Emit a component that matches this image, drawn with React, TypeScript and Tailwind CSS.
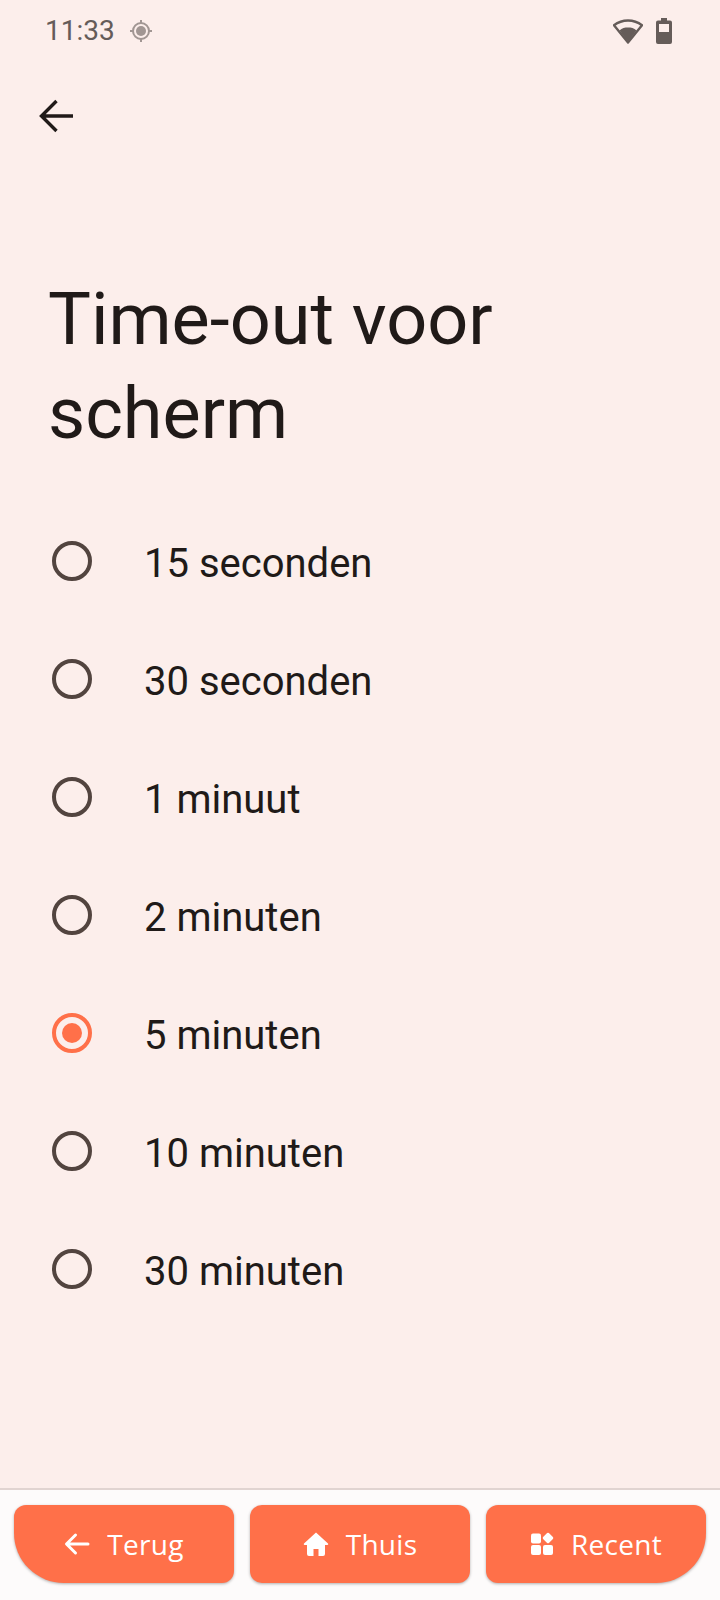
const options = ['15 seconden', '30 seconden', '1 minuut', '2 minuten', '5 minuten', '10 minuten', '30 minuten'];

const Radio = ({ checked }: { checked: boolean }) => (
    <span className={`flex h-10 w-10 shrink-0 items-center justify-center rounded-full border-4 ${checked ? 'border-[#ff7049]' : 'border-[#52443f]'}`}>
        {checked && <span className="h-5 w-5 rounded-full bg-[#ff7049]" />}
    </span>
);

export default function App() {
    return (
        <div className="flex h-[1600px] w-[720px] flex-col overflow-hidden bg-[#fceeeb] font-['Roboto',sans-serif] text-[#201a18]">
            {/* Status bar */}
            <div className="flex h-[60px] items-center justify-between pl-[45px] pr-[48px] pt-[2px] text-[#655c59]">
                <div className="flex items-center gap-[14px]">
                    <span className="text-[28px] leading-none">11:33</span>
                    <svg width="24" height="24" viewBox="0 0 24 24" fill="none" className="opacity-60">
                        <circle cx="12" cy="12" r="8" stroke="currentColor" strokeWidth="2" />
                        <circle cx="12" cy="12" r="5" fill="currentColor" />
                        <path d="M12 1v4M12 19v4M1 12h4M19 12h4" stroke="currentColor" strokeWidth="2" />
                    </svg>
                </div>
                <div className="flex items-center gap-[13px]">
                    <svg width="30" height="26" viewBox="0 0 30 26">
                        <path d="M15 2.500C9.500 2.500 5 4.200 1 7.300L15 24.500 29 7.300C25 4.200 20.500 2.500 15 2.500Z" fill="none" stroke="currentColor" strokeWidth="2.400" strokeLinejoin="round" />
                        <path d="M6.500 12.500 15 24l8.500-11.500C21 10 18.200 9.600 15 9.600s-6 .4-8.500 2.900Z" fill="currentColor" />
                    </svg>
                    <svg width="16" height="26" viewBox="0 0 16 26">
                        <path d="M5 0h6v2.500h3a2 2 0 0 1 2 2V24a2 2 0 0 1-2 2H2a2 2 0 0 1-2-2V4.500a2 2 0 0 1 2-2h3V0Z" fill="currentColor" />
                        <rect x="3" y="6" width="10" height="8" fill="#fceeeb" />
                    </svg>
                </div>
            </div>

            {/* Back arrow */}
            <div className="mt-[23px] flex h-[58px] items-center pl-[39px] pt-[8px]">
                <svg width="34" height="34" viewBox="0 0 34 34" fill="none" stroke="#201a18" strokeWidth="3.400">
                    <path d="M34 17H3M17.500 2 2.500 17l15 15" />
                </svg>
            </div>

            {/* Title */}
            <h1 className="mt-[132px] pl-[48px] text-[72px] font-normal leading-[94px]">
                Time-out voor
                <br />
                scherm
            </h1>

            {/* Options */}
            <div className="mt-[41px] flex flex-col">
                {options.map((label) => (
                    <div key={label} className="flex h-[118px] items-center pl-[52px]">
                        <Radio checked={label === '5 minuten'} />
                        <span className="ml-[52px] pt-[5px] text-[40px] leading-none">{label}</span>
                    </div>
                ))}
            </div>

            {/* Navigation bar */}
            <div className="mt-auto flex h-[112px] gap-4 border-t-2 border-[#e1d4d1] bg-[#fdfbfb] px-[14px] pt-[15px] font-['Open_Sans',sans-serif]">
                <button className="flex h-[78px] w-[220px] items-center justify-center gap-[17px] rounded-[12px] rounded-bl-[50px] bg-[#ff7049] text-[28px] font-medium tracking-[0.3px] text-white shadow-[0_1px_3px_rgba(0,0,0,0.3)]">
                    <svg width="26" height="24" viewBox="0 0 26 24" fill="none" stroke="white" strokeWidth="3" strokeLinecap="round" strokeLinejoin="round">
                        <path d="M24 12H3M11.500 3 2.500 12l9 9" />
                    </svg>
                    Terug
                </button>
                <button className="flex h-[78px] w-[220px] items-center justify-center gap-[17px] rounded-[12px] bg-[#ff7049] text-[28px] font-medium tracking-[0.3px] text-white shadow-[0_1px_3px_rgba(0,0,0,0.3)]">
                    <svg width="26" height="26" viewBox="0 0 26 26" fill="white">
                        <path d="M13 1.500 1 12.500c-.5.500-.2 1.500.6 1.500H4v9a2 2 0 0 0 2 2h4.500v-7h5v7H20a2 2 0 0 0 2-2v-9h2.400c.8 0 1.100-1 .6-1.500L13 1.500Z" />
                    </svg>
                    Thuis
                </button>
                <button className="flex h-[78px] w-[220px] items-center justify-center gap-[17px] rounded-[12px] rounded-br-[50px] bg-[#ff7049] text-[28px] font-medium tracking-[0.3px] text-white shadow-[0_1px_3px_rgba(0,0,0,0.3)]">
                    <svg width="24" height="24" viewBox="0 0 24 24" fill="white">
                        <rect x="1" y="1.500" width="10" height="10" rx="2" />
                        <rect x="1" y="13" width="10" height="10" rx="2" />
                        <rect x="13" y="13" width="10" height="10" rx="2" />
                        <path d="M18 2 22 6 18 10 14 6Z" stroke="white" strokeWidth="2.500" strokeLinejoin="round" />
                    </svg>
                    Recent
                </button>
            </div>
        </div>
    );
}
